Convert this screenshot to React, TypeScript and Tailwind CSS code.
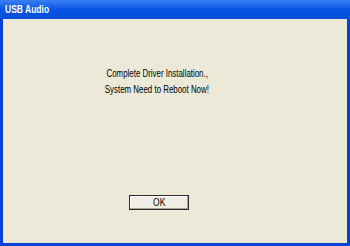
import React from "react";

const App = () => {
  return (
    <div
      className="w-[350px] h-[246px] flex flex-col bg-[#0842d6] overflow-hidden"
      style={{ fontFamily: '"Liberation Sans", Arial, sans-serif' }}
    >
      <div className="h-[19px] flex items-center pl-[5px] bg-gradient-to-b from-[#3a80f3] via-[#0454e6] to-[#0a4fd8] shrink-0">
        <span className="text-white font-bold text-[10px] leading-none scale-x-[0.85] origin-left whitespace-nowrap">
          USB Audio
        </span>
      </div>
      <div className="flex-1 mx-[3px] mb-[3px] bg-[#ece9d8] flex flex-col">
        <div className="mt-[47px] w-[308px] flex flex-col items-center text-[10px] text-black leading-[16px]">
          <div className="scale-x-[0.79] whitespace-nowrap">Complete Driver Installation.,</div>
          <div className="scale-x-[0.79] whitespace-nowrap">System Need to Reboot Now!</div>
        </div>
        <button className="mt-[97px] ml-[126px] w-[60px] h-[15px] border border-[#2a2a2a] bg-[#f0eee4] shadow-[inset_-1px_-1px_0_#a6a496,inset_1px_1px_0_#ffffff] text-[10px] leading-none text-black flex items-center justify-center">
          <span className="scale-x-[0.85]">OK</span>
        </button>
      </div>
    </div>
  );
};

export default App;
